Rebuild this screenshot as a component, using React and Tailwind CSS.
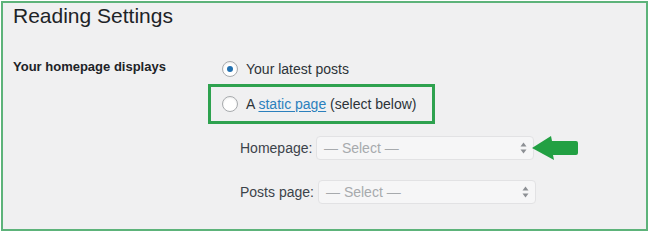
import React from "react";

const Radio = ({ checked }) => (
  <span className="w-[16px] h-[16px] rounded-full border border-[#a7aaad] bg-white shadow-[inset_0_1px_2px_rgba(0,0,0,0.08)] flex items-center justify-center shrink-0">
    {checked && <span className="w-[6px] h-[6px] rounded-full bg-[#2271b1]" />}
  </span>
);

const Select = ({ width }) => (
  <div
    className={`${width} h-[24px] rounded-[4px] border border-[#e2e2e4] bg-[#f6f6f7] pl-[7px] pr-[6px] flex items-center justify-between`}
  >
    <span className="text-[14px] text-[#a7aaad]">— Select —</span>
    <svg width="7" height="12" viewBox="0 0 7 12">
      <path d="M3.5 0.5 L6.5 4.5 L0.5 4.5 Z" fill="#8c8f94" />
      <path d="M3.5 11.5 L6.5 7.5 L0.5 7.5 Z" fill="#8c8f94" />
    </svg>
  </div>
);

// green pointer next to the homepage select
const Arrow = () => (
  <svg width="46" height="24" viewBox="0 0 46 24" className="shrink-0 ml-[-2px]">
    <path
      d="M0 12 L19 0 L20 5 L44 5 Q46 5 46 7 L46 17 Q46 19 44 19 L21 19 L22 24 Z"
      fill="#22a043"
    />
  </svg>
);

const App = () => {
  return (
    <div className="w-[650px] h-[232px] bg-white p-[1px] font-['Liberation_Sans',Arial,sans-serif]">
      <div className="h-[230px] w-[647px] border-2 border-[#5db37a] bg-[#f0f0f1] pl-[10px]">
        <h1 className="text-[21px] leading-[26px] text-[#1d2327]">
          Reading Settings
        </h1>
        <div className="flex mt-[27px]">
          <div className="w-[195px] text-[13px] leading-[22px] font-bold text-[#1d2327]">
            Your homepage displays
          </div>
          <div className="flex flex-col pt-[2px]">
            <label className="h-[22px] pl-[14px] flex items-center gap-[8px] text-[14px] text-[#2c3338]">
              <Radio checked />
              Your latest posts
            </label>
            <div className="mt-[4px] w-[227px] h-[40px] border-[3px] border-[#2ea24f] pl-[11px] flex items-center gap-[8px] text-[14px] text-[#2c3338]">
              <Radio />
              <span>
                A{" "}
                <a className="text-[#2b80bd] underline underline-offset-2">
                  static page
                </a>{" "}
                (select below)
              </span>
            </div>
            <div className="mt-[12px] pl-[32px] flex items-center">
              <span className="w-[76px] text-[14px] text-[#3c434a]">
                Homepage:
              </span>
              <Select width="w-[218px]" />
              <Arrow />
            </div>
            <div className="mt-[20px] pl-[32px] flex items-center">
              <span className="w-[78px] text-[14px] text-[#3c434a]">
                Posts page:
              </span>
              <Select width="w-[218px]" />
            </div>
          </div>
        </div>
      </div>
    </div>
  );
};

export default App;
